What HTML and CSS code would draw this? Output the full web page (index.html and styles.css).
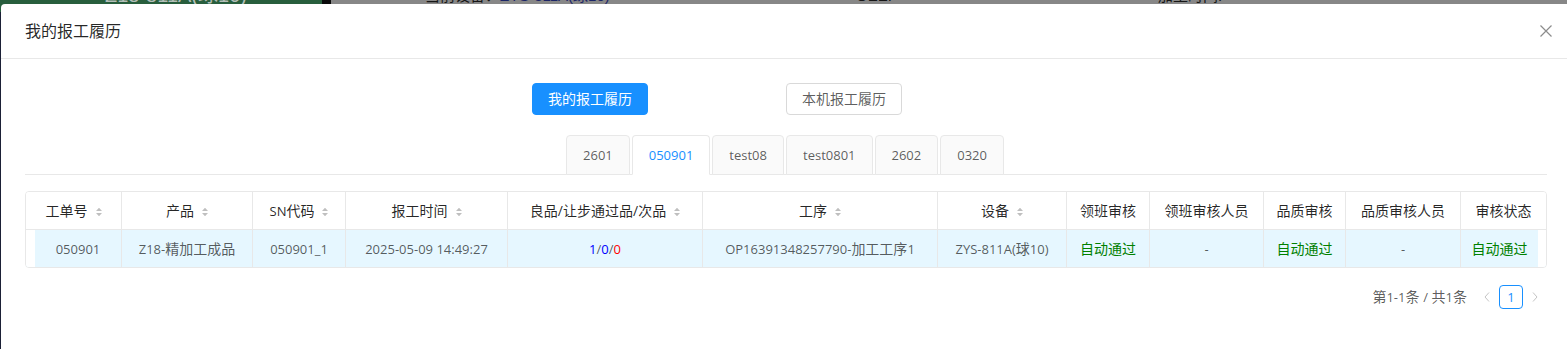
FILE: index.html
```html
<!DOCTYPE html>
<html lang="zh-CN">
<head>
<meta charset="utf-8">
<title>我的报工履历</title>
<link rel="stylesheet" href="styles.css">
</head>
<body>
<div class="page">
  <div class="page-head">
    <div class="brand"><span class="brand-text">Z18-811A(球10)</span></div>
    <div class="divider"></div>
    <div class="info">
      <div class="info-item w1"><span>当前设备：</span><span class="navy">ZYS-811A(球10)</span></div>
      <div class="info-item w2"><span>OEE:</span></div>
      <div class="info-item"><span>加工时间:</span></div>
    </div>
  </div>
</div>

<div class="modal">
  <div class="modal-header">
    <div class="title">我的报工履历</div>
    <div class="close">
      <svg width="12" height="12" viewBox="0 0 12 12"><path d="M0.5 0.5L11.5 11.5M11.5 0.5L0.5 11.5" stroke="#8c8c8c" stroke-width="1.2" fill="none"/></svg>
    </div>
  </div>
  <div class="modal-body">
    <div class="btn-row">
      <div class="btn primary">我的报工履历</div>
      <div class="btn">本机报工履历</div>
    </div>

    <div class="tabs">
      <div class="tab">2601</div>
      <div class="tab active">050901</div>
      <div class="tab">test08</div>
      <div class="tab">test0801</div>
      <div class="tab">2602</div>
      <div class="tab">0320</div>
    </div>

    <div class="table-wrap">
      <table>
        <colgroup>
          <col class="c1"><col class="c2"><col class="c3"><col class="c4"><col class="c5"><col class="c6">
          <col class="c7"><col class="c8"><col class="c9"><col class="c10"><col class="c11"><col class="c12">
        </colgroup>
        <thead>
          <tr>
            <th>工单号<svg class="sorter" width="6" height="10" viewBox="0 0 6 10"><path d="M0 4L3 0.8L6 4Z M0 6L3 9.2L6 6Z" fill="#bfbfbf"/></svg></th>
            <th>产品<svg class="sorter" width="6" height="10" viewBox="0 0 6 10"><path d="M0 4L3 0.8L6 4Z M0 6L3 9.2L6 6Z" fill="#bfbfbf"/></svg></th>
            <th><span class="en">SN</span>代码<svg class="sorter" width="6" height="10" viewBox="0 0 6 10"><path d="M0 4L3 0.8L6 4Z M0 6L3 9.2L6 6Z" fill="#bfbfbf"/></svg></th>
            <th>报工时间<svg class="sorter" width="6" height="10" viewBox="0 0 6 10"><path d="M0 4L3 0.8L6 4Z M0 6L3 9.2L6 6Z" fill="#bfbfbf"/></svg></th>
            <th>良品/让步通过品/次品<svg class="sorter" width="6" height="10" viewBox="0 0 6 10"><path d="M0 4L3 0.8L6 4Z M0 6L3 9.2L6 6Z" fill="#bfbfbf"/></svg></th>
            <th>工序<svg class="sorter" width="6" height="10" viewBox="0 0 6 10"><path d="M0 4L3 0.8L6 4Z M0 6L3 9.2L6 6Z" fill="#bfbfbf"/></svg></th>
            <th>设备<svg class="sorter" width="6" height="10" viewBox="0 0 6 10"><path d="M0 4L3 0.8L6 4Z M0 6L3 9.2L6 6Z" fill="#bfbfbf"/></svg></th>
            <th>领班审核</th>
            <th>领班审核人员</th>
            <th>品质审核</th>
            <th>品质审核人员</th>
            <th>审核状态</th>
          </tr>
        </thead>
        <tbody>
          <tr>
            <td class="en">050901</td>
            <td><span class="en">Z18-</span>精加工成品</td>
            <td class="en">050901_1</td>
            <td class="en">2025-05-09 14:49:27</td>
            <td class="en"><span class="blue">1</span>/<span class="blue">0</span>/<span class="red">0</span></td>
            <td><span class="en">OP16391348257790-</span>加工工序<span class="en">1</span></td>
            <td><span class="en">ZYS-811A(</span>球<span class="en">10)</span></td>
            <td class="green">自动通过</td>
            <td class="en">-</td>
            <td class="green">自动通过</td>
            <td class="en">-</td>
            <td class="green">自动通过</td>
          </tr>
        </tbody>
      </table>
    </div>

    <div class="pager">
      <div class="total">第<span class="en">1-1</span>条 <span class="en">/</span> 共<span class="en">1</span>条</div>
      <div class="pg">
        <svg width="6" height="10" viewBox="0 0 6 10"><path d="M5 0.5L1 5L5 9.5" stroke="#c4c4c4" stroke-width="1" fill="none"/></svg>
      </div>
      <div class="pg cur en">1</div>
      <div class="pg">
        <svg width="6" height="10" viewBox="0 0 6 10"><path d="M1 0.5L5 5L1 9.5" stroke="#c4c4c4" stroke-width="1" fill="none"/></svg>
      </div>
    </div>
  </div>
</div>
</body>
</html>
```

FILE: styles.css
```css
* { box-sizing: border-box; }

html, body {
  margin: 0;
  padding: 0;
  overflow: hidden;
}

body {
  width: 1567px;
  height: 349px;
  position: relative;
  background: #1b2036;
  font-family: "Open Sans", "Noto Sans CJK SC", sans-serif;
  font-size: 14px;
}

.en { font-size: 13px; }

/* background page (masked) */
.page-head {
  display: flex;
  height: 12px;
  overflow: hidden;
}
.brand {
  width: 322px;
  background: #285e3d;
  padding-left: 105px;
}
.brand-text {
  display: block;
  margin-top: -15px;
  font-family: "Liberation Sans", "Noto Sans CJK SC", sans-serif;
  font-size: 20px;
  line-height: 20px;
  color: #b4beb8;
}
.divider {
  width: 9px;
  background: #0a0a0a;
}
.info {
  flex: 1;
  display: flex;
  background: #878787;
  padding-left: 94px;
}
.info-item {
  margin-top: -14px;
  font-family: "Liberation Sans", "Noto Sans CJK SC", sans-serif;
  font-size: 15px;
  line-height: 20px;
  color: #161616;
  white-space: nowrap;
}
.info-item.w1 { width: 431px; }
.info-item.w2 { width: 302px; }
.navy { color: #1c2566; }

/* modal */
.modal {
  position: absolute;
  top: 4px;
  left: 1px;
  width: 1570px;
  height: 420px;
  background: #fff;
  border-radius: 4px;
}
.modal-header {
  display: flex;
  align-items: center;
  justify-content: space-between;
  padding: 16px 19px 16px 24px;
  border-bottom: 1px solid #e8e8e8;
}
.title {
  font-size: 16px;
  line-height: 22px;
  color: rgba(0, 0, 0, 0.85);
}
.close {
  width: 12px;
  height: 12px;
  display: flex;
}
.modal-body {
  padding: 24px;
}

.btn-row {
  display: flex;
  gap: 138px;
  padding-left: 507px;
}
.btn {
  height: 32px;
  padding: 0 15px;
  border: 1px solid #d9d9d9;
  border-radius: 4px;
  background: #fff;
  color: rgba(0, 0, 0, 0.65);
  font-size: 14px;
  line-height: 30px;
  white-space: nowrap;
}
.btn.primary {
  background: #1890ff;
  border-color: #1890ff;
  color: #fff;
}

.tabs {
  margin-top: 20px;
  margin-bottom: 16px;
  display: flex;
  justify-content: center;
  height: 40px;
  border-bottom: 1px solid #e8e8e8;
}
.tab {
  height: 40px;
  padding: 0 16px;
  margin-right: 2px;
  border: 1px solid #e8e8e8;
  border-radius: 4px 4px 0 0;
  background: #fafafa;
  color: rgba(0, 0, 0, 0.65);
  font-size: 13px;
  line-height: 38px;
}
.tab.active {
  background: #fff;
  color: #1890ff;
  border-bottom-color: #fff;
}

.table-wrap {
  border: 1px solid #e8e8e8;
  border-radius: 4px;
  overflow: hidden;
}
table {
  width: 100%;
  border-collapse: separate;
  border-spacing: 0;
  table-layout: fixed;
}
.c1 { width: 96px; }
.c2 { width: 131px; }
.c3 { width: 93px; }
.c4 { width: 162px; }
.c5 { width: 195px; }
.c6 { width: 235px; }
.c7 { width: 129px; }
.c8 { width: 83px; }
.c9 { width: 114px; }
.c10 { width: 82px; }
.c11 { width: 115px; }
.c12 { width: 85px; }

th, td {
  padding: 0 8px;
  text-align: center;
  vertical-align: middle;
  border-right: 1px solid #e8e8e8;
  line-height: 20px;
  white-space: nowrap;
}
th {
  height: 38px;
  border-bottom: 1px solid #e8e8e8;
  font-weight: 400;
  color: rgba(0, 0, 0, 0.85);
  background: #fff;
}
td {
  height: 37px;
  background: #e6f7ff;
  color: rgba(0, 0, 0, 0.65);
}
th:last-child { border-right: 0; }
td:first-child { border-left: 9px solid #fff; }
td:last-child { border-right: 8px solid #fff; }

.sorter {
  margin-left: 8px;
  vertical-align: -1px;
}

.blue { color: #0000ff; }
.red { color: #ff0000; }
.green { color: #008000; }

.pager {
  margin-top: 17px;
  display: flex;
  justify-content: flex-end;
  align-items: center;
  height: 24px;
}
.total {
  margin-right: 8px;
  color: rgba(0, 0, 0, 0.65);
  line-height: 24px;
}
.pg {
  width: 24px;
  height: 24px;
  display: flex;
  align-items: center;
  justify-content: center;
}
.pg.cur {
  border: 1px solid #1890ff;
  border-radius: 4px;
  color: #1890ff;
  line-height: 22px;
}
```
